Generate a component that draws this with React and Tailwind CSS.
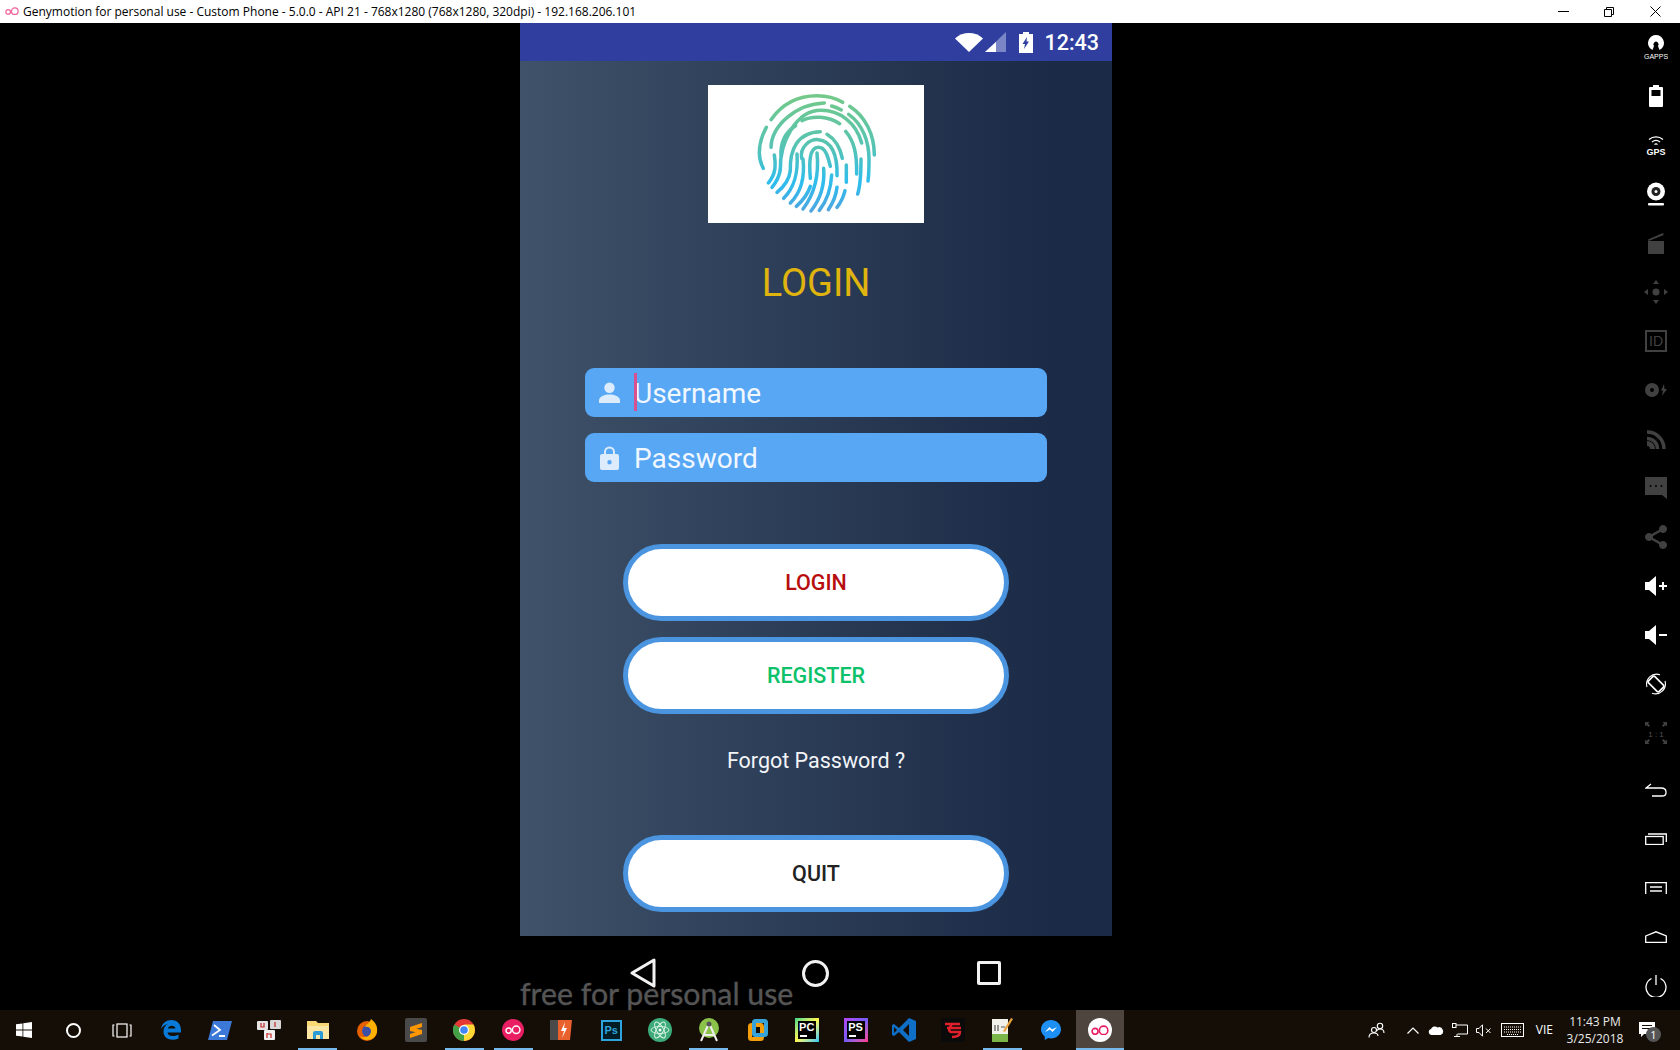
import React from 'react';

const ROBOTO = "font-['Roboto',sans-serif]";

function GenyLogo({ size = 14, color = '#f0649a' }) {
  return (
    <svg width={size} height={size * 0.6} viewBox="0 0 20 12" fill="none" stroke={color} strokeWidth="1.800">
      <circle cx="4.500" cy="7" r="3.300" />
      <circle cx="14" cy="6" r="4.700" />
    </svg>
  );
}

function Fingerprint() {
  const lines = [
    'M90 122C125 72 175 50 228 50C258 50 284 57 305 70',
    'M326 82C372 112 400 165 400 228',
    'M76 145C62 170 55 192 55 222C55 240 60 255 67 268',
    'M90 205C92 140 165 75 250 72',
    'M272 81C282 84 292 88 301 93',
    'M323 106C366 136 384 190 384 240C384 265 384 285 381 306',
    'M100 228C105 262 104 285 82 312',
    'M118 272C116 190 165 94 240 94C295 94 345 130 362 192',
    'M118 272C114 295 106 310 93 325',
    'M183 125C215 108 262 112 296 134',
    'M164 140C135 158 118 190 120 230',
    'M148 275C146 210 170 160 238 158',
    'M148 275C145 300 130 322 108 340',
    'M258 166C285 182 298 210 304 238',
    'M314 157C338 185 348 220 347 285',
    'M360 240C360 280 358 320 350 345',
    'M182 238C176 205 205 180 232 182C270 185 290 225 288 290',
    'M208 298C204 250 205 205 232 205C256 205 262 240 268 262',
    'M168 225C172 285 160 325 128 358',
    'M186 240C192 295 180 340 148 372',
    'M208 322C200 345 185 365 166 382',
    'M228 222C234 280 224 340 186 390',
    'M248 268C252 320 238 360 210 396',
    'M272 288C270 325 258 365 235 394',
    'M288 325C285 350 276 372 262 392',
    'M316 258V310',
    'M312 335C307 355 300 370 288 385',
  ];
  return (
    <svg width="150" height="150" viewBox="0 0 450 450" fill="none">
      <defs>
        <linearGradient id="fp" x1="0" y1="45" x2="0" y2="400" gradientUnits="userSpaceOnUse">
          <stop offset="0" stopColor="#74c987" />
          <stop offset="0.45" stopColor="#55c3b4" />
          <stop offset="0.75" stopColor="#2ebdee" />
          <stop offset="1" stopColor="#50a4de" />
        </linearGradient>
      </defs>
      {lines.map((d) => (
        <path key={d} d={d} stroke="url(#fp)" strokeWidth="10.500" strokeLinecap="round" />
      ))}
    </svg>
  );
}

function PersonIcon() {
  return (
    <svg width="21" height="21" viewBox="0 0 21 21" fill="#dcecfd">
      <circle cx="10.500" cy="5.800" r="5.200" />
      <path d="M0 21v-2.600C0 14.500 6 12.600 10.500 12.600S21 14.500 21 18.400V21z" />
    </svg>
  );
}

function LockIcon() {
  return (
    <svg width="19" height="24" viewBox="0 0 19 24" fill="#dcecfd">
      <path fillRule="evenodd" d="M4 8V6a5.500 5.500 0 0 1 11 0v2h2a2 2 0 0 1 2 2v12a2 2 0 0 1-2 2H2a2 2 0 0 1-2-2V10a2 2 0 0 1 2-2zm2 0h7V6a3.500 3.500 0 0 0-7 0zm3.500 6a2.200 2.200 0 1 0 0 4.400 2.200 2.200 0 0 0 0-4.400z" />
    </svg>
  );
}

function InputRow({ icon, label, caret }) {
  return (
    <div className={`relative flex items-center w-[462px] h-[49px] bg-[#58a7f5] rounded-[9px] text-[#f1f7fe] text-[28px] ${ROBOTO}`}>
      <div className="w-[49px] flex justify-center">{icon}</div>
      <span className="pt-[2px]">{label}</span>
      {caret && <span className="absolute left-[49px] top-[5px] w-[3px] h-[38px] bg-[#d9508f]" />}
    </div>
  );
}

function PillButton({ label, color }) {
  return (
    <button className={`w-[386px] h-[77px] pt-[2px] rounded-full bg-white border-[5px] border-[#4a94e0] text-[21.500px] font-medium ${ROBOTO} ${color}`}>
      {label}
    </button>
  );
}

// toolbar icons on the right side of the emulator
const W = '#ffffff';
const D = '#414141';
const toolIcons = [
  <svg key="gapps" width="24" height="24" viewBox="0 0 24 24" fill={W}>
    <path d="M12 0a8 8 0 0 0-6 13.200L8.500 15l1.500-4a2.600 2.600 0 1 1 4 0l1.500 4 2.500-1.800A8 8 0 0 0 12 0z" />
    <text x="12" y="23.500" textAnchor="middle" fontSize="7" fontFamily="Liberation Sans" fill={W}>GAPPS</text>
  </svg>,
  <svg key="bat" width="14" height="22" viewBox="0 0 14 22">
    <path d="M4 0h6v2h3a1 1 0 0 1 1 1v18a1 1 0 0 1-1 1H1a1 1 0 0 1-1-1V3a1 1 0 0 1 1-1h3z" fill={W} />
    <rect x="2.500" y="5" width="9" height="6" fill="#000" />
  </svg>,
  <svg key="gps" width="24" height="22" viewBox="0 0 24 22" fill="none" stroke={W}>
    <path d="M5 5.500c4-3.500 10-3.500 14 0M8 8c2.500-2 5.500-2 8 0" strokeWidth="1.300" />
    <path d="M10.500 10.500c1-.8 2-.8 3 0" strokeWidth="1.300" />
    <text x="12" y="21" textAnchor="middle" fontSize="9" fontWeight="700" fontFamily="Liberation Sans" fill={W} stroke="none">GPS</text>
  </svg>,
  <svg key="cam" width="20" height="24" viewBox="0 0 20 24">
    <circle cx="10" cy="9.500" r="9" fill={W} />
    <circle cx="10" cy="9.500" r="4.500" fill="#222" />
    <circle cx="10" cy="9.500" r="1.500" fill={W} />
    <rect x="2" y="21" width="16" height="2.500" rx="1" fill={W} />
  </svg>,
  <svg key="clap" width="16" height="22" viewBox="0 0 16 22" fill={D}>
    <path d="M0 9h16v13H0zM0 7.500 15 1l.7 2L.7 9z" />
  </svg>,
  <svg key="move" width="24" height="24" viewBox="0 0 24 24" fill={D}>
    <circle cx="12" cy="12" r="3.500" />
    <path d="M12 0l3 4H9zM12 24l-3-4h6zM0 12l4-3v6zM24 12l-4 3V9z" />
  </svg>,
  <div key="id" className="w-[22px] h-[22px] border-2 border-[#414141] flex items-center justify-center text-[#414141] text-[14px] font-['Liberation_Sans',sans-serif]">ID</div>,
  <svg key="disk" width="22" height="14" viewBox="0 0 22 14" fill={D}>
    <path fillRule="evenodd" d="M7 0a7 7 0 1 0 0 14A7 7 0 0 0 7 0zm0 5a2 2 0 1 1 0 4 2 2 0 0 1 0-4z" />
    <path d="M19 1l-3 6.500h2L17 13l5-7h-2.500z" />
  </svg>,
  <svg key="rss" width="19" height="19" viewBox="0 0 19 19" fill="none" stroke={D} strokeWidth="3.500">
    <path d="M0 2c9.500 0 17 7.500 17 17M0 8.500c6 0 10.500 4.500 10.500 10.500" />
    <path d="M0 13.500c3 0 5.500 2.500 5.500 5.500" strokeWidth="5" />
  </svg>,
  <svg key="sms" width="22" height="22" viewBox="0 0 22 22" fill={D}>
    <path fillRule="evenodd" d="M0 0h22v22l-5-4H0zm5.500 8a1 1 0 1 0 0 2 1 1 0 0 0 0-2zm5.500 0a1 1 0 1 0 0 2 1 1 0 0 0 0-2zm5.500 0a1 1 0 1 0 0 2 1 1 0 0 0 0-2z" />
  </svg>,
  <svg key="share" width="22" height="24" viewBox="0 0 22 24" fill={D} stroke={D}>
    <circle cx="18" cy="4" r="3.500" />
    <circle cx="4" cy="12" r="3.500" />
    <circle cx="18" cy="20" r="3.500" />
    <path d="M18 4 4 12l14 8" fill="none" strokeWidth="2.500" />
  </svg>,
  <svg key="volup" width="22" height="20" viewBox="0 0 22 20" fill={W}>
    <path d="M0 6h4l7-6v20l-7-6H0zM14 9h3V6h2v3h3v2h-3v3h-2v-3h-3z" />
  </svg>,
  <svg key="voldn" width="22" height="20" viewBox="0 0 22 20" fill={W}>
    <path d="M0 6h4l7-6v20l-7-6H0zM14 9h8v2h-8z" />
  </svg>,
  <svg key="rot" width="22" height="22" viewBox="0 0 22 22" fill="none" stroke={W}>
    <path d="M2 14A10 10 0 0 1 15 1.800M20 8a10 10 0 0 1-13 12.200" strokeWidth="1.100" />
    <rect x="6.500" y="3.500" width="9" height="15" rx="1.500" transform="rotate(-45 11 11)" strokeWidth="1.600" />
  </svg>,
  <svg key="one" width="22" height="22" viewBox="0 0 22 22" fill={D}>
    <path d="M0 0h4.500L3 1.500 5 3.500 3.500 5 1.500 3 0 4.500zM22 0v4.500L20.500 3l-2 2L17 3.500l2-2L17.500 0zM0 22v-4.500L1.500 19l2-2L5 18.500l-2 2L4.500 22zM22 22h-4.500l1.500-1.500-2-2 1.500-1.500 2 2 1.500-1.500z" />
    <text x="11" y="14.500" textAnchor="middle" fontSize="8" fontFamily="Liberation Sans" fill="#555">1 : 1</text>
  </svg>,
];

const navIcons = [
  <svg key="back" width="22" height="14" viewBox="0 0 22 14" fill="none" stroke={W} strokeWidth="1.300">
    <path d="M6 1 1 5h15c3 0 5 1.500 5 4v1c0 2-1.500 3-4 3H7" />
  </svg>,
  <svg key="rec" width="22" height="12" viewBox="0 0 22 12" fill="none" stroke={W} strokeWidth="1.300">
    <rect x="0.700" y="3.500" width="17.500" height="8" />
    <path d="M3 1h18.300v8" />
  </svg>,
  <svg key="menu" width="22" height="12" viewBox="0 0 22 12" fill="none" stroke={W} strokeWidth="1.300">
    <path d="M.7 12V.7h20.600V12" />
    <path d="M5 5h12M5 9h12" strokeWidth="2" stroke="#bbb" />
  </svg>,
  <svg key="home" width="22" height="12" viewBox="0 0 22 12" fill="none" stroke={W} strokeWidth="1.300">
    <path d="M.7 5 11 .8 21.300 5v6.300H.7z" />
  </svg>,
  <svg key="pow" width="22" height="22" viewBox="0 0 22 22" fill="none" stroke={W} strokeWidth="1.300">
    <path d="M6.500 3.500a10 10 0 1 0 9 0M11 0v10" />
  </svg>,
];

function Toolbar() {
  return (
    <div className="ml-auto w-[48px] flex flex-col items-center">
      {toolIcons.map((icon) => (
        <div key={icon.key} className="h-[49px] w-full flex items-center justify-center">{icon}</div>
      ))}
      <div className="h-[8px]" />
      {navIcons.map((icon) => (
        <div key={icon.key} className="h-[49px] w-full flex items-center justify-center">{icon}</div>
      ))}
    </div>
  );
}

// taskbar app icons, one per 49px cell
const apps = [
  { id: 'win', icon: (
    <svg width="16" height="16" viewBox="0 0 16 16" fill={W}><path d="M0 2.300 6.500 1.400v6.200H0zM7.300 1.300 16 0v7.600H7.300zM0 8.400h6.500v6.200L0 13.700zM7.300 8.400H16V16l-8.700-1.300z" /></svg>
  ) },
  { id: 'cortana', icon: <div className="w-[15px] h-[15px] rounded-full border-2 border-white" /> },
  { id: 'task', icon: (
    <svg width="20" height="15" viewBox="0 0 20 15" fill="none" stroke={W} strokeWidth="1.200"><rect x="5" y="1" width="10" height="13" /><path d="M2.500 2H1v11h1.500M17.500 2H19v11h-1.500" /></svg>
  ) },
  { id: 'edge', icon: (
    <svg width="20" height="20" viewBox="0 0 20 20" fill="#0a7ad8"><path fillRule="evenodd" d="M0 9C1 3 5.500 0 10.500 0 16 0 20 4 20 10.500v2H6.500c.3 3.500 5.500 5 11 2v4c-7 3-15 .5-15-7C2.500 8 4 5.500 7 4 3.500 4.500 1.500 6.500 0 9zm6.800-.5h7.600c0-3.500-6.500-4-7.600 0z" /></svg>
  ) },
  { id: 'powershell', icon: (
    <svg width="24" height="19" viewBox="0 0 24 19"><path d="M5 0h19l-5 19H0z" fill="#3c78d8" /><path d="m6 4 6 5-8 5.500M11 15h6" fill="none" stroke={W} strokeWidth="1.800" /></svg>
  ) },
  { id: 'unikey', icon: (
    <svg width="24" height="20" viewBox="0 0 24 20"><rect x="0" y="1" width="11" height="9" rx="1" fill="#e4e4e4" /><rect x="13" y="0" width="11" height="9" rx="1" fill="#d8d8d8" /><rect x="7" y="10" width="11" height="10" rx="1" fill="#f2f2f2" /><path d="M4 3v4h3V3M18 2v5M10 13v5M10 14h4v4" fill="none" stroke="#c62828" strokeWidth="1.200" /></svg>
  ) },
  { id: 'folder', active: true, icon: (
    <svg width="22" height="18" viewBox="0 0 22 18"><path d="M0 0h9l2 2h11v16H0z" fill="#f8d775" /><path d="M0 5h22v13H0z" fill="#fbe7a3" /><path d="M6 18v-6a2 2 0 0 1 2-2h6a2 2 0 0 1 2 2v6h-3v-4H9v4z" fill="#2b9bd8" /></svg>
  ) },
  { id: 'firefox', icon: (
    <svg width="22" height="22" viewBox="0 0 22 22"><circle cx="11" cy="12" r="10" fill="#e66000" /><circle cx="12" cy="12" r="6" fill="#3b4fa8" /><path d="M15 0c4 3 7 7 6 13-1 5-5 8-10 8-3 0-6-2-7-4 5 3 11 0 11-5 0-3-3-5-6-4 1-3 5-4 6-8z" fill="#ffb000" /></svg>
  ) },
  { id: 'sublime', icon: (
    <div className="w-[22px] h-[24px] bg-[#4a4a4a] rounded-[2px] flex items-center justify-center">
      <svg width="12" height="15" viewBox="0 0 12 15" fill="#ff9800"><path d="M12 0v4L0 8V4zM12 7v4L0 15v-4zM0 4.500 12 7v3.500L0 8z" /></svg>
    </div>
  ) },
  { id: 'chrome', active: true, icon: (
    <svg width="22" height="22" viewBox="0 0 22 22"><circle cx="11" cy="11" r="11" fill="#e53935" /><path d="M11 11 1.400 5.500A11 11 0 0 0 11 22z" fill="#43a047" /><path d="M11 11V22A11 11 0 0 0 20.500 5.500H11z" fill="#fdd835" /><circle cx="11" cy="11" r="5" fill={W} /><circle cx="11" cy="11" r="3.800" fill="#4285f4" /></svg>
  ) },
  { id: 'geny', active: true, icon: (
    <div className="w-[22px] h-[22px] rounded-full bg-[#e91e63] flex items-center justify-center"><GenyLogo size={16} color="#fff" /></div>
  ) },
  { id: 'git', icon: (
    <svg width="24" height="24" viewBox="0 0 24 24"><path d="M0 2h12v20H0z" fill="#4a4a4a" /><path d="M8 2h14l-2 20H8z" fill="#e9622e" /><path d="M15 4l-4 9h3l-2 7 5-10h-3z" fill="#fff" /></svg>
  ) },
  { id: 'photoshop', icon: (
    <div className="w-[21px] h-[21px] bg-[#001d26] border-2 border-[#2fa3dc] flex items-center justify-center text-[#2fa3dc] text-[11px] font-bold font-['Liberation_Sans',sans-serif]">Ps</div>
  ) },
  { id: 'atom', icon: (
    <svg width="24" height="24" viewBox="0 0 24 24"><circle cx="12" cy="12" r="12" fill="#3daa7a" /><g fill="none" stroke="#d8f2e4" strokeWidth="1"><ellipse cx="12" cy="12" rx="9" ry="3.500" /><ellipse cx="12" cy="12" rx="9" ry="3.500" transform="rotate(60 12 12)" /><ellipse cx="12" cy="12" rx="9" ry="3.500" transform="rotate(120 12 12)" /></g><circle cx="12" cy="12" r="1.500" fill="#fff" /></svg>
  ) },
  { id: 'studio', active: true, icon: (
    <svg width="22" height="24" viewBox="0 0 22 24"><circle cx="11" cy="10" r="10" fill="#8bc34a" /><path d="M11 5 3 23M11 5l8 18M6 17h10" stroke="#eee" strokeWidth="2" fill="none" /><circle cx="11" cy="6" r="2.500" fill="#555" /></svg>
  ) },
  { id: 'vmware', icon: (
    <svg width="20" height="22" viewBox="0 0 20 22" fill="none" strokeWidth="4"><rect x="2" y="6" width="12" height="14" rx="1.500" stroke="#f59e0b" /><rect x="6" y="2" width="12" height="14" rx="1.500" stroke="#38a3d8" /></svg>
  ) },
  { id: 'pycharm', icon: (
    <div className="w-[24px] h-[24px] p-[3px] bg-gradient-to-br from-[#21d789] via-[#fcf84a] to-[#07c3f2]">
      <div className="relative w-full h-full bg-black text-white text-[11px] font-bold leading-[13px] text-center font-['Liberation_Sans',sans-serif]">PC<div className="absolute left-[2px] bottom-[2px] w-[7px] h-[2px] bg-white" /></div>
    </div>
  ) },
  { id: 'phpstorm', icon: (
    <div className="w-[24px] h-[24px] p-[3px] bg-gradient-to-br from-[#b345f1] via-[#765af8] to-[#ff318c]">
      <div className="relative w-full h-full bg-black text-white text-[11px] font-bold leading-[13px] text-center font-['Liberation_Sans',sans-serif]">PS<div className="absolute left-[2px] bottom-[2px] w-[7px] h-[2px] bg-white" /></div>
    </div>
  ) },
  { id: 'vscode', icon: (
    <svg width="24" height="24" viewBox="0 0 24 24" fill="#0f6fc6"><path d="M17 0l7 3v18l-7 3L7 14l-5 4-2-1V7l2-1 5 4zM17 6l-6 6 6 6zM2 9v6l3-3z" fillRule="evenodd" /></svg>
  ) },
  { id: 'garena', icon: (
    <div className="w-[24px] h-[24px] bg-[#0a0a0a] flex items-center justify-center">
      <svg width="20" height="18" viewBox="0 0 20 18" fill="none" stroke="#e2202c" strokeWidth="2.400"><path d="M2 3h15M9 3c-3 4-4 7-1 8h9c0 3-3 5-8 5M4 7h14" /></svg>
    </div>
  ) },
  { id: 'notepad', active: true, icon: (
    <svg width="22" height="24" viewBox="0 0 22 24"><path d="M1 1h16v23H1z" fill="#f2f2ea" /><path d="M1 16h16v8H1z" fill="#7ab648" /><path d="M4 7v6M7 7v6M10 9h4" stroke="#555" strokeWidth="1.200" /><path d="M20 0l2 1-8 13-2-1z" fill="#e8a33d" /></svg>
  ) },
  { id: 'messenger', icon: (
    <svg width="20" height="20" viewBox="0 0 20 20"><path d="M10 0C4.500 0 0 4.200 0 9.300c0 3 1.500 5.500 3.800 7.200V20l3.400-1.900c.9.300 1.800.4 2.800.4 5.500 0 10-4.100 10-9.200S15.500 0 10 0z" fill="#1e90f5" /><path d="m4 12 4.500-5 2.500 2.500L16 7l-4.500 5L9 9.500z" fill="#fff" /></svg>
  ) },
];

function Taskbar() {
  return (
    <div className="h-[40px] bg-[#140e07] flex items-stretch text-white font-['Open_Sans',sans-serif]">
      <div className="flex">
        {apps.map((app) => (
          <div key={app.id} className="relative w-[48.9px] flex items-center justify-center">
            {app.icon}
            {app.active && <div className="absolute bottom-0 left-[5px] right-[5px] h-[2px] bg-[#76b9ed]" />}
          </div>
        ))}
        <div className="relative w-[48.9px] bg-[#4d453e] flex items-center justify-center">
          <div className="w-[24px] h-[24px] rounded-full bg-white flex items-center justify-center"><GenyLogo size={18} color="#e91e63" /></div>
          <div className="absolute bottom-0 left-0 right-0 h-[2px] bg-[#76b9ed]" />
        </div>
      </div>

      <div className="ml-auto flex items-center">
        <svg className="mr-[22px]" width="17" height="16" viewBox="0 0 17 16" fill="none" stroke={W} strokeWidth="1.100">
          <circle cx="6" cy="8" r="2.500" /><path d="M1 15.500c0-3 2-4.500 5-4.500s4 1.500 4 3" />
          <circle cx="12" cy="4" r="2.700" /><path d="M8.500 9c1-1.500 2-2 3.500-2 2.500 0 4 1.500 4 4" />
        </svg>
        <svg className="mr-[9px]" width="12" height="7" viewBox="0 0 12 7" fill="none" stroke={W} strokeWidth="1.200"><path d="m.5 6.500 5.500-5.500 5.500 5.500" /></svg>
        <svg className="mr-[8px]" width="16" height="10" viewBox="0 0 15 10" fill={W}><path d="M3 10a3 3 0 0 1-.5-5.900A4 4 0 0 1 9 2.500 3.200 3.200 0 0 1 12 10z" /></svg>
        <svg className="mr-[8px]" width="16" height="15" viewBox="0 0 16 15" fill="none" stroke={W} strokeWidth="1"><path d="M4 2h11.500v9H5.500M8 13.500H2M5 11v2.500" /><rect x=".5" y=".5" width="3.500" height="4" /></svg>
        <svg className="mr-[10px]" width="15" height="13" viewBox="0 0 15 13" fill="none" stroke={W} strokeWidth="1"><path d="M.5 4.500H3L6.500.8v11.400L3 8.500H.5zM10 4.500l4.500 4.500M14.500 4.500 10 9" /></svg>
        <svg className="mr-[12px]" width="23" height="14" viewBox="0 0 23 14" fill="none" stroke={W} strokeWidth="1"><rect x=".5" y=".5" width="22" height="13" /><path d="M3 4h17M3 6.500h17M3 9h17M6 11.500h11" strokeDasharray="1 1" /></svg>
        <span className="mr-[12px] text-[12px]">VIE</span>
        <div className="mr-[14px] w-[60px] text-[12px] leading-[17px] text-center text-[#e9e9e9]">
          <div>11:43 PM</div>
          <div>3/25/2018</div>
        </div>
        <div className="relative mr-[25px] w-[16px] h-[16px]">
          <svg width="16" height="16" viewBox="0 0 16 16" fill={W}><path fillRule="evenodd" d="M0 0h16v12H5l-3 3v-3H0zM3 3v1h10V3zm0 3v1h10V6z" /></svg>
          <div className="absolute left-[7px] top-[5px] w-[15px] h-[15px] rounded-full bg-[#555] text-white text-[11px] leading-[15px] text-center">1</div>
        </div>
      </div>
    </div>
  );
}

export default function App() {
  return (
    <div className="relative w-[1680px] h-[1050px] bg-black overflow-hidden flex flex-col">
      {/* Window title bar */}
      <div className="h-[23px] bg-white flex items-center text-black text-[12px] font-['Open_Sans',sans-serif] shrink-0">
        <div className="w-[23px] flex justify-center"><GenyLogo size={14} /></div>
        <span>Genymotion for personal use - Custom Phone - 5.0.0 - API 21 - 768x1280 (768x1280, 320dpi) - 192.168.206.101</span>
        <div className="ml-auto flex items-center">
          <div className="w-[46px] flex justify-center"><div className="w-[11px] h-px bg-black" /></div>
          <div className="w-[46px] flex justify-center">
            <svg width="10" height="10" viewBox="0 0 10 10" fill="none" stroke="#000"><path d="M.5 2.500h7v7h-7zM2.500 2.500v-2h7v7h-2" /></svg>
          </div>
          <div className="w-[46px] flex justify-center">
            <svg width="11" height="11" viewBox="0 0 11 11" fill="none" stroke="#000"><path d="m.5.500 10 10M10.500.500l-10 10" /></svg>
          </div>
          <div className="w-[2px]" />
        </div>
      </div>

      <div className="flex-1 flex min-h-0">
        {/* Phone */}
        <div className="ml-[520px] w-[592px] flex flex-col">
          <div className="h-[38px] bg-[#303f9f] flex items-center justify-end text-white shrink-0">
            <svg width="28" height="19" viewBox="0 0 28 19" fill={W}><path d="M0 5.500C8-1.800 20-1.800 28 5.500L14 19z" /></svg>
            <svg className="ml-[2px]" width="21" height="20" viewBox="0 0 21 20"><path d="M21 0v20H0z" fill="#7a86c6" /><path d="M11 10v10H0z" fill={W} /></svg>
            <svg className="ml-[13px]" width="14" height="21" viewBox="0 0 14 21"><path d="M4 0h6v2h4v19H0V2h4z" fill={W} /><path d="M8 5 3.500 12H6l-1 5 5-7.500H7.500z" fill="#303f9f" /></svg>
            <span className={`ml-[11px] mr-[13px] pt-[3px] text-[21.500px] font-medium ${ROBOTO}`}>12:43</span>
          </div>

          <div className="flex-1 flex flex-col items-center bg-gradient-to-r from-[#3f5269] to-[#1b2a46] to-90%">
            <div className="mt-[24px] w-[216px] h-[138px] bg-white flex items-center justify-center shrink-0">
              <Fingerprint />
            </div>
            <h1 className={`mt-[37px] h-[46px] leading-[46px] text-[38px] text-[#e0b40f] ${ROBOTO}`}>LOGIN</h1>
            <div className="mt-[62px] flex flex-col gap-[16px]">
              <InputRow icon={<PersonIcon />} label="Username" caret />
              <InputRow icon={<LockIcon />} label="Password" />
            </div>
            <div className="mt-[62px] flex flex-col gap-[16px]">
              <PillButton label="LOGIN" color="text-[#b70d0d]" />
              <PillButton label="REGISTER" color="text-[#0dc26a]" />
            </div>
            <div className={`mt-[32px] text-[21.500px] leading-[30px] text-[#f2f4f7] ${ROBOTO}`}>Forgot Password ?</div>
            <div className="mt-[59px]">
              <PillButton label="QUIT" color="text-[#222222]" />
            </div>
          </div>

          {/* Android nav bar */}
          <div className="h-[74px] shrink-0 grid grid-cols-3 w-[518px] mx-auto items-center justify-items-center">
            <svg width="26" height="30" viewBox="0 0 26 30" fill="none" stroke="#f2f2f2" strokeWidth="3" strokeLinejoin="round"><path d="M24 2v26L2 15z" /></svg>
            <div className="w-[27px] h-[27px] rounded-full border-[3px] border-[#f2f2f2]" />
            <div className="w-[24px] h-[24px] rounded-[2px] border-[3px] border-[#f2f2f2]" />
          </div>
        </div>

        <Toolbar />
      </div>

      <Taskbar />

      {/* Genymotion watermark */}
      <div className="absolute left-[520px] top-[973px] text-[30.300px] leading-[40px] text-[#555555] font-['Lato',sans-serif] [-webkit-text-stroke:0.4px_#555555]">free for personal use</div>
    </div>
  );
}
